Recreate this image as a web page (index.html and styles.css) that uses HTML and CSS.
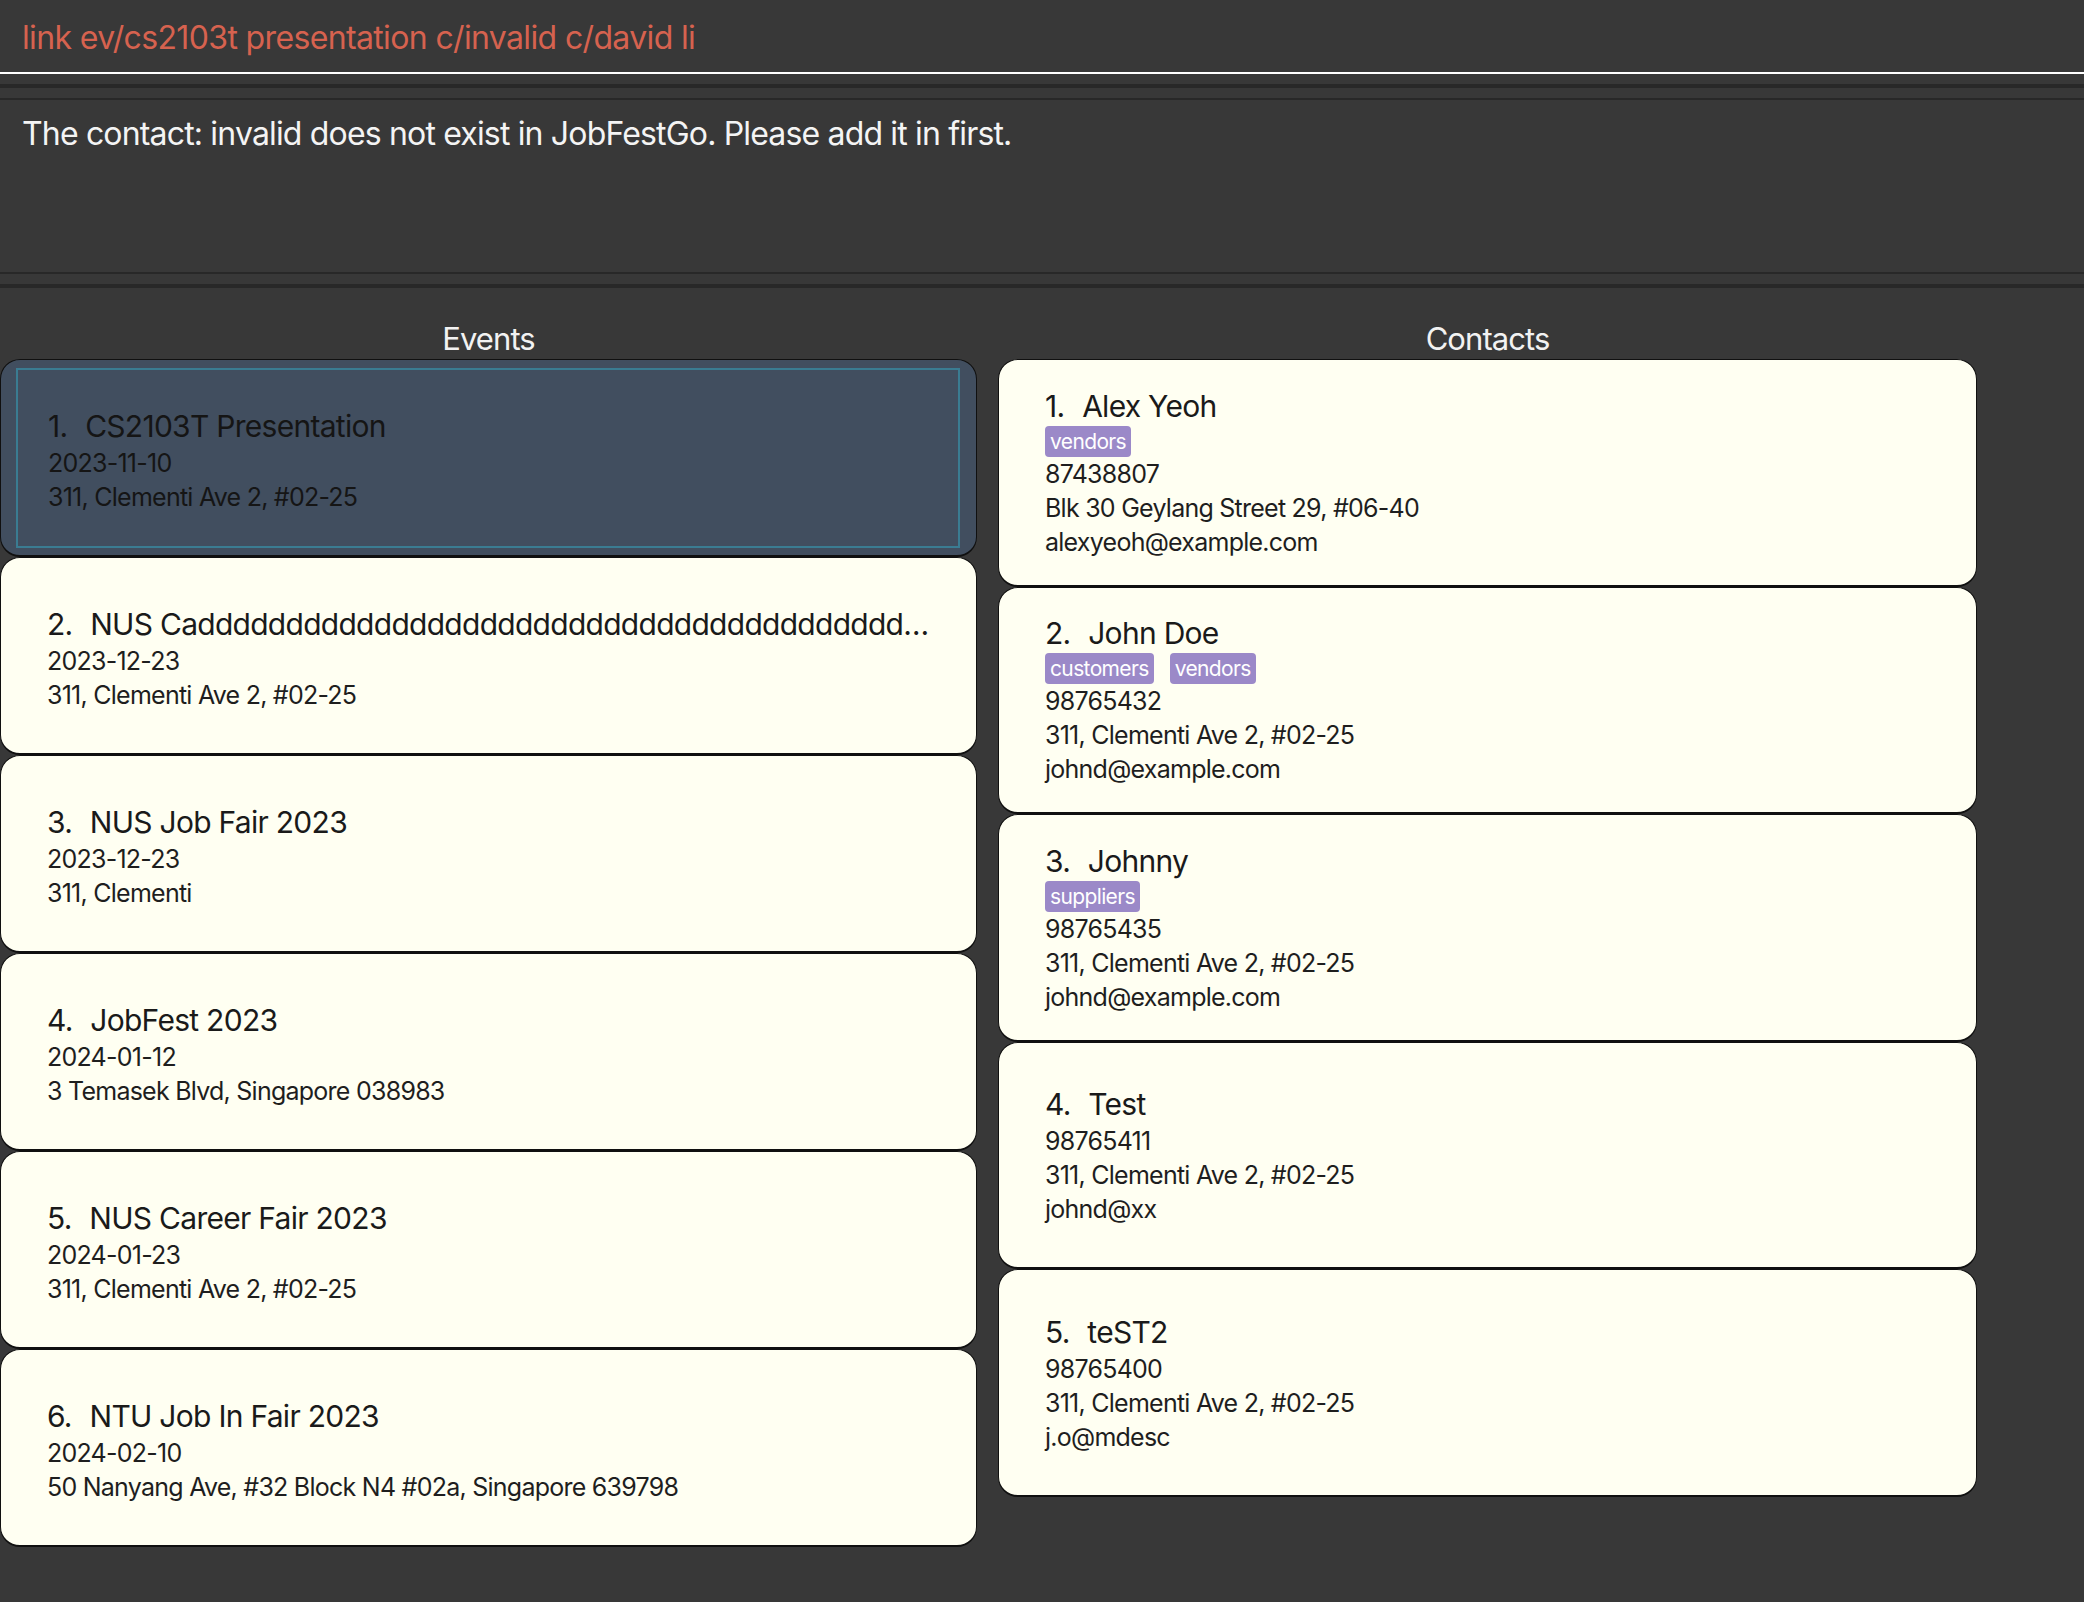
FILE: index.html
```
<!DOCTYPE html>
<html lang="en">
<head>
<meta charset="utf-8">
<title>JobFestGo</title>
<link rel="stylesheet" href="styles.css">
</head>
<body>
<div class="app">
  <div class="command-box">
    <span class="command-text">link ev/cs2103t presentation c/invalid c/david li</span>
  </div>
  <div class="sep sep-top">
    <div class="line thick"></div>
    <div class="gap"></div>
    <div class="line thin"></div>
  </div>
  <div class="result">The contact: invalid does not exist in JobFestGo. Please add it in first.</div>
  <div class="sep sep-bottom">
    <div class="line thin"></div>
    <div class="gap"></div>
    <div class="line thick"></div>
  </div>
  <div class="lists">
    <section class="column">
      <h2 class="column-title">Events</h2>
      <div class="cards">
        <div class="card event selected">
          <div class="focus">
            <div class="title"><span class="idx">1.</span> <span>CS2103T Presentation</span></div>
            <div class="detail">2023-11-10</div>
            <div class="detail">311, Clementi Ave 2, #02-25</div>
          </div>
        </div>
        <div class="card event">
          <div class="title"><span class="idx">2.</span> <span>NUS Caddddddddddddddddddddddddddddddddddddddddddddddddddddddd</span></div>
          <div class="detail">2023-12-23</div>
          <div class="detail">311, Clementi Ave 2, #02-25</div>
        </div>
        <div class="card event">
          <div class="title"><span class="idx">3.</span> <span>NUS Job Fair 2023</span></div>
          <div class="detail">2023-12-23</div>
          <div class="detail">311, Clementi</div>
        </div>
        <div class="card event">
          <div class="title"><span class="idx">4.</span> <span>JobFest 2023</span></div>
          <div class="detail">2024-01-12</div>
          <div class="detail">3 Temasek Blvd, Singapore 038983</div>
        </div>
        <div class="card event">
          <div class="title"><span class="idx">5.</span> <span>NUS Career Fair 2023</span></div>
          <div class="detail">2024-01-23</div>
          <div class="detail">311, Clementi Ave 2, #02-25</div>
        </div>
        <div class="card event">
          <div class="title"><span class="idx">6.</span> <span>NTU Job In Fair 2023</span></div>
          <div class="detail">2024-02-10</div>
          <div class="detail">50 Nanyang Ave, #32 Block N4 #02a, Singapore 639798</div>
        </div>
      </div>
    </section>
    <section class="column">
      <h2 class="column-title">Contacts</h2>
      <div class="cards">
        <div class="card contact">
          <div class="title"><span class="idx">1.</span> <span>Alex Yeoh</span></div>
          <div class="tags"><span class="tag">vendors</span></div>
          <div class="detail">87438807</div>
          <div class="detail">Blk 30 Geylang Street 29, #06-40</div>
          <div class="detail">alexyeoh@example.com</div>
        </div>
        <div class="card contact">
          <div class="title"><span class="idx">2.</span> <span>John Doe</span></div>
          <div class="tags"><span class="tag">customers</span><span class="tag">vendors</span></div>
          <div class="detail">98765432</div>
          <div class="detail">311, Clementi Ave 2, #02-25</div>
          <div class="detail">johnd@example.com</div>
        </div>
        <div class="card contact">
          <div class="title"><span class="idx">3.</span> <span>Johnny</span></div>
          <div class="tags"><span class="tag">suppliers</span></div>
          <div class="detail">98765435</div>
          <div class="detail">311, Clementi Ave 2, #02-25</div>
          <div class="detail">johnd@example.com</div>
        </div>
        <div class="card contact">
          <div class="title"><span class="idx">4.</span> <span>Test</span></div>
          <div class="detail">98765411</div>
          <div class="detail">311, Clementi Ave 2, #02-25</div>
          <div class="detail">johnd@xx</div>
        </div>
        <div class="card contact">
          <div class="title"><span class="idx">5.</span> <span>teST2</span></div>
          <div class="detail">98765400</div>
          <div class="detail">311, Clementi Ave 2, #02-25</div>
          <div class="detail">j.o@mdesc</div>
        </div>
      </div>
    </section>
  </div>
</div>
</body>
</html>
```

FILE: styles.css
```
* {
  box-sizing: border-box;
}

html, body {
  margin: 0;
  padding: 0;
  background: #383838;
}

body {
  font-family: Inter, "Noto Sans", "Liberation Sans", sans-serif;
  width: 2084px;
  height: 1602px;
  overflow: hidden;
}

.app {
  display: flex;
  flex-direction: column;
  height: 100%;
}

.command-box {
  height: 74px;
  padding: 19px 22px 0;
  border-bottom: 2px solid #ffffff;
}

.command-text {
  display: block;
  font-size: 32px;
  line-height: 38px;
  letter-spacing: -0.02em;
  color: #d6624f;
  white-space: nowrap;
}

.sep {
  display: flex;
  flex-direction: column;
}

.sep-top {
  padding-top: 10px;
}

.line {
  background: #282828;
}

.line.thick {
  height: 4px;
}

.line.thin {
  height: 2px;
}

.gap {
  height: 10px;
}

.result {
  height: 172px;
  padding: 15px 22px 0;
  font-size: 32px;
  line-height: 38px;
  letter-spacing: -0.026em;
  color: #f4f4f4;
}

.lists {
  display: grid;
  grid-template-columns: 977px 979px;
  column-gap: 21px;
  align-items: start;
}

.column-title {
  margin: 0;
  padding-top: 32px;
  height: 71px;
  font-size: 31px;
  line-height: 38px;
  font-weight: 400;
  letter-spacing: -0.03em;
  color: #f2f2f2;
  text-align: center;
}

.cards {
  display: flex;
  flex-direction: column;
}

.card {
  display: flex;
  flex-direction: column;
  justify-content: center;
  background: #fffff2;
  border: 1px solid #101010;
  border-bottom-width: 2px;
  border-radius: 20px;
  padding: 0 40px 0 46px;
  color: #1c1c1c;
  overflow: hidden;
}

.card.event {
  height: 198px;
  padding-top: 5px;
}

.card.contact {
  height: 227.6px;
  padding-top: 1px;
}

.card.selected {
  background: #414e5f;
  padding: 8px 16px 7px 15px;
}

.focus {
  flex: 1;
  display: flex;
  flex-direction: column;
  justify-content: center;
  border: 2px solid #3a7c92;
  padding: 5px 20px 0 30px;
  min-width: 0;
}

.card.selected .title,
.card.selected .detail {
  color: #151515;
}

.title {
  font-size: 30px;
  line-height: 39px;
  letter-spacing: -0.024em;
  white-space: nowrap;
  overflow: hidden;
  text-overflow: ellipsis;
  color: #1a1a1a;
}

.idx {
  margin-right: 10px;
}

.detail {
  font-size: 25px;
  line-height: 34px;
  letter-spacing: -0.03em;
  white-space: nowrap;
  color: #1e1e1e;
}

.tags {
  display: flex;
  gap: 16px;
}

.tag {
  display: inline-block;
  height: 31px;
  padding: 0 5px;
  font-size: 21px;
  line-height: 31px;
  letter-spacing: -0.03em;
  color: #ffffff;
  background: #9b89c8;
  border-radius: 4px;
}
```
